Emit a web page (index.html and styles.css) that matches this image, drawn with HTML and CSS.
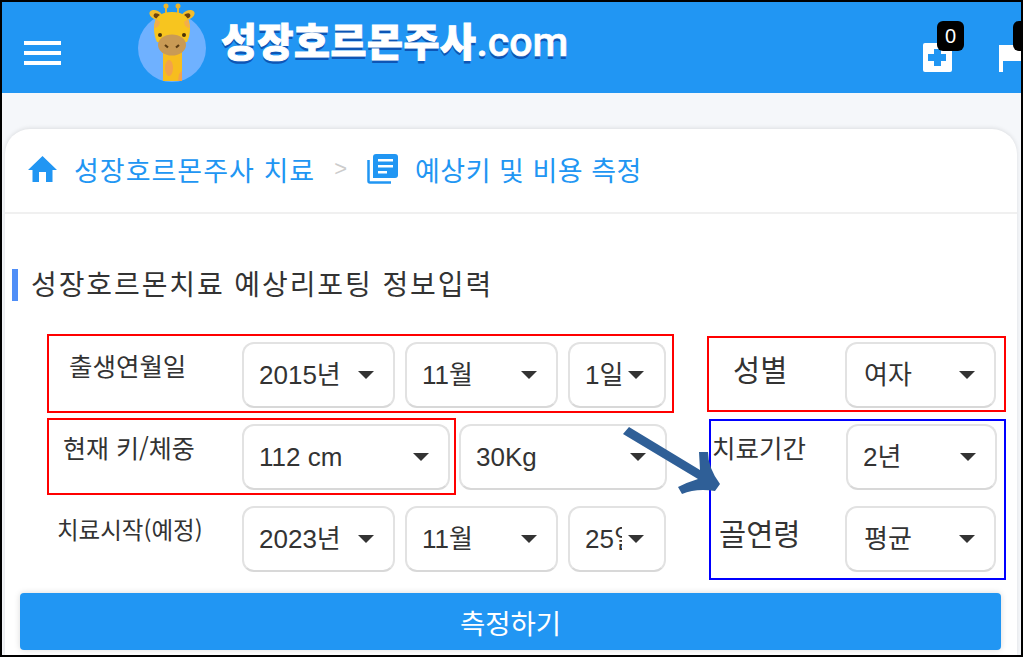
FILE: index.html
```html
<!DOCTYPE html>
<html lang="ko">
<head>
    <meta charset="UTF-8">
    <meta name="viewport" content="width=device-width, initial-scale=1.0">
    <title>성장호르몬주사 예상키 및 비용 측정</title>
    <link rel="stylesheet" href="styles.css">
</head>
<body>
<div class="frame">
    <header class="topbar">
        <div class="burger"><span></span><span></span><span></span></div>
        <a class="logo" href="#">
            <svg class="giraffe" width="72" height="82" viewBox="0 0 72 82">
                <circle cx="36" cy="46" r="34" fill="#6fb1ff"/>
                <path d="M30 4v12M42 4v12" stroke="#e9b32c" stroke-width="2"/>
                <circle cx="30" cy="4" r="2.500" fill="#eeb52a"/>
                <circle cx="42" cy="4" r="2.500" fill="#eeb52a"/>
                <ellipse cx="20" cy="13" rx="7" ry="4.500" transform="rotate(25 20 13)" fill="#f2bd2d"/>
                <ellipse cx="21" cy="14" rx="3.500" ry="2.500" transform="rotate(25 21 14)" fill="#6b4310"/>
                <ellipse cx="52" cy="13" rx="7" ry="4.500" transform="rotate(-25 52 13)" fill="#f2bd2d"/>
                <ellipse cx="51" cy="14" rx="3.500" ry="2.500" transform="rotate(-25 51 14)" fill="#6b4310"/>
                <path d="M27 48h19v31H27z" fill="#f7bd1e"/>
                <ellipse cx="33" cy="66" rx="4" ry="8" fill="#f3a24b"/>
                <path d="M43 72l3-3v10h-4z" fill="#f3a24b"/>
                <path d="M18 26q0-16 18-16t18 16q0 8-3 14H21q-3-6-3-14z" fill="#f7c51f"/>
                <path d="M18 26q5 0 6-6l-4-3zM54 26q-5 0-6-6l4-3z" fill="#f3ae4b"/>
                <circle cx="24" cy="33" r="2" fill="#4a3208"/>
                <circle cx="48" cy="33" r="2" fill="#4a3208"/>
                <ellipse cx="36" cy="43" rx="14" ry="10.500" fill="#c99a55"/>
                <path d="M29 43l3 2.500M43 43l-3 2.500" stroke="#5c3c12" stroke-width="2.200"/>
            </svg>
            <span class="logo-text">성장호르몬주사<em>.com</em></span>
        </a>
        <div class="top-icons">
            <a class="top-icon" href="#">
                <svg width="29" height="29" viewBox="0 0 29 29"><path d="M2 0h25a2 2 0 0 1 2 2v25a2 2 0 0 1-2 2H2a2 2 0 0 1-2-2V2a2 2 0 0 1 2-2z" fill="#fff"/><path d="M11 6h7v5h5v7h-5v5h-7v-5H5v-7h6z" fill="#2196f3"/></svg>
                <span class="badge">0</span>
            </a>
            <a class="top-icon" href="#">
                <svg width="29" height="29" viewBox="0 0 29 29"><path d="M0 2h29v16H4v11H0z" fill="#fff"/></svg>
                <span class="badge">0</span>
            </a>
        </div>
    </header>

    <main class="content">
        <section class="card">
            <nav class="crumbs">
                <svg class="crumb-home" width="29" height="26" viewBox="0 0 29 26"><path d="M14.500 0L29 14h-4.500v12H18V16h-7v10H4.500V14H0z" fill="#2196f3"/></svg>
                <a href="#">성장호르몬주사 치료</a>
                <span class="crumb-sep">&gt;</span>
                <svg class="crumb-book" width="31" height="30" viewBox="0 0 31 30"><path d="M9 0h19a3 3 0 0 1 3 3v18a3 3 0 0 1-3 3H6V3a3 3 0 0 1 3-3z" fill="#2196f3"/><path d="M11 5h15v2.500H11zM11 11h15v2.500H11zM11 17h9v2.500H11z" fill="#fff"/><path d="M1.500 6v21a1.500 1.500 0 0 0 1.500 1.500h21" fill="none" stroke="#2196f3" stroke-width="2.500"/></svg>
                <a class="crumb-last" href="#">예상키 및 비용 측정</a>
            </nav>

            <h2 class="section-title">성장호르몬치료 예상리포팅 정보입력</h2>

            <form class="report-form">
                <div class="form-row">
                    <label class="lbl lbl-birth">출생연월일</label>
                    <div class="sel sel-year"><select><option>2015년</option></select></div>
                    <div class="sel sel-year"><select><option>11월</option></select></div>
                    <div class="sel sel-day"><select><option>1일</option></select></div>
                    <label class="lbl lbl-gender">성별</label>
                    <div class="sel sel-side"><select><option>여자</option></select></div>
                </div>
                <div class="form-row">
                    <label class="lbl lbl-height">현재 키/체중</label>
                    <div class="sel sel-wide"><select><option>112 cm</option></select></div>
                    <div class="sel sel-wide"><select><option>30Kg</option></select></div>
                    <label class="lbl lbl-period">치료기간</label>
                    <div class="sel sel-side sel-tight"><select><option>2년</option></select></div>
                </div>
                <div class="form-row">
                    <label class="lbl lbl-start">치료시작(예정)</label>
                    <div class="sel sel-year"><select><option>2023년</option></select></div>
                    <div class="sel sel-year"><select><option>11월</option></select></div>
                    <div class="sel sel-day"><select><option>25일</option></select></div>
                    <label class="lbl lbl-bone">골연령</label>
                    <div class="sel sel-side"><select><option>평균</option></select></div>
                </div>
                <button type="button" class="submit-btn">측정하기</button>
            </form>
        </section>
    </main>

    <!-- 캡처 위에 덧그린 표시 -->
    <div class="mark mark-birth"></div>
    <div class="mark mark-height"></div>
    <div class="mark mark-gender"></div>
    <div class="mark mark-blue"></div>
    <svg class="mark-arrow" width="100" height="70" viewBox="0 0 100 70">
        <path d="M7 1L78 44L77 26H86Q86 42 98 58L93 65Q74 62 60 68L56 61Q66 56 76 53L1 8z" fill="#2f5f97"/>
    </svg>
</div>
</body>
</html>
```

FILE: styles.css
```css
* {
    box-sizing: border-box;
}
body {
    margin: 0;
    font-family: "Liberation Sans", "Noto Sans CJK KR", sans-serif;
    color: #333;
    background: #fff;
}
a {
    text-decoration: none;
    color: inherit;
}
.frame {
    position: relative;
    width: 1023px;
    height: 657px;
    border: 2px solid #000;
    overflow: hidden;
    display: flex;
    flex-direction: column;
    background: #f5f7fa;
}

/* 상단 바 */
.topbar {
    flex: none;
    height: 91px;
    background: #2196f3;
    display: flex;
    padding-left: 22px;
    overflow: hidden;
}
.burger {
    width: 37px;
    padding-top: 39px;
    display: flex;
    flex-direction: column;
    gap: 6px;
}
.burger span {
    display: block;
    height: 4px;
    background: #fff;
}
.logo {
    display: flex;
    margin-left: 75px;
    height: 82px;
}
.logo-text {
    margin: 12px 0 0 13px;
    font-family: "Noto Sans CJK KR", sans-serif;
    font-weight: 900;
    font-size: 39px;
    line-height: 50px;
    letter-spacing: 0.6px;
    color: #fff;
    -webkit-text-stroke: 1px #fff;
    text-shadow: 0 3px 0 #0d55b5;
    white-space: nowrap;
}
.logo-text em {
    font-family: "Roboto", sans-serif;
    font-style: normal;
    font-weight: 500;
    font-size: 41px;
    letter-spacing: 0;
    -webkit-text-stroke: 0.6px #fff;
}
.top-icons {
    margin-left: auto;
    display: flex;
    gap: 47px;
    flex: none;
    width: 98px;
    padding-top: 41px;
}
.top-icon {
    position: relative;
    display: block;
    width: 29px;
    height: 29px;
    flex: none;
}
.badge {
    position: absolute;
    top: -22px;
    left: 14px;
    width: 27px;
    height: 30px;
    border-radius: 6px;
    background: #000;
    color: #fff;
    font-size: 20px;
    line-height: 30px;
    text-align: center;
}

/* 본문 */
.content {
    flex: 1;
    padding: 36px 4px 0 3px;
}
.card {
    height: 100%;
    background: #fff;
    border-radius: 25px 25px 0 0;
    box-shadow: 0 -1px 4px rgba(0, 0, 0, .1);
}
.crumbs {
    height: 85px;
    padding: 0 0 3px 23px;
    border-bottom: 2px solid #f0f0f0;
    display: flex;
    align-items: center;
    font-size: 27px;
    letter-spacing: 1px;
    color: #2196f3;
    font-family: "Noto Sans CJK KR", sans-serif;
}
.crumb-home {
    margin-right: 17px;
}
.crumb-sep {
    margin: 0 19px;
    color: #ccc;
    font-size: 22px;
    font-family: "Liberation Sans", sans-serif;
}
.crumb-book {
    margin-right: 17px;
}
.crumb-last {
    letter-spacing: 0.5px;
}
.section-title {
    margin: 55px 0 0 7px;
    padding-left: 13px;
    height: 32px;
    border-left: 6px solid #4f8ef7;
    font-family: "Noto Sans CJK KR", sans-serif;
    font-weight: 400;
    font-size: 28px;
    letter-spacing: 1.9px;
    line-height: 28px;
    color: #333;
}

/* 입력 폼 */
.report-form {
    padding-top: 41px;
}
.form-row {
    display: flex;
    height: 66px;
    margin: 0 0 16px 42px;
}
.lbl {
    flex: none;
    font-family: "Noto Sans CJK KR", sans-serif;
    font-size: 25px;
    line-height: 34px;
    color: #333;
}
.lbl-birth {
    width: 195px;
    padding: 6px 0 0 22px;
    font-size: 25.500px;
}
.lbl-height {
    width: 195px;
    padding: 6px 0 0 16px;
}
.lbl-start {
    width: 195px;
    padding: 6px 0 0 10px;
    font-size: 23.5px;
}
.lbl-gender {
    width: 179px;
    padding: 9px 0 0 67px;
    font-size: 29.500px;
}
.lbl-period {
    width: 179px;
    padding: 6px 0 0 45px;
    font-size: 25.500px;
}
.lbl-bone {
    width: 179px;
    padding: 9px 0 0 53px;
    font-size: 29.500px;
}
.sel {
    position: relative;
    flex: none;
    height: 66px;
    margin-right: 10px;
}
.sel::after {
    content: "";
    position: absolute;
    right: 21px;
    top: 29px;
    border-left: 8px solid transparent;
    border-right: 8px solid transparent;
    border-top: 8px solid #333;
    pointer-events: none;
}
.sel select {
    appearance: none;
    width: 100%;
    height: 100%;
    padding: 0 30px 0 15px;
    border: 2px solid #e2e2e2;
    border-bottom-color: #d8d8d8;
    border-radius: 12px;
    background: #fff;
    color: #333;
    font-family: "Liberation Sans", "Noto Sans CJK KR", sans-serif;
    font-size: 26px;
}
.sel-year {
    width: 153px;
}
.sel-day {
    width: 98px;
    margin-right: 0;
}
.sel-day select {
    padding-right: 42px;
}
.sel-day::after {
    right: 22px;
}
.sel-wide {
    width: 208px;
    margin-right: 9px;
}
.sel-wide + .sel-wide {
    margin-right: 0;
}
.sel-side {
    width: 151px;
    margin-right: 0;
}
.sel-side select {
    padding-left: 17px;
}
.sel-side.sel-tight select {
    padding-left: 15px;
}
.submit-btn {
    display: block;
    width: 981px;
    height: 57px;
    margin: 21px 0 0 15px;
    border: none;
    border-radius: 4px;
    background: #2196f3;
    color: #fff;
    font-family: "Noto Sans CJK KR", sans-serif;
    font-size: 27.500px;
    box-shadow: 0 0 6px rgba(0, 0, 0, .15);
    cursor: pointer;
}

/* 덧그린 빨간/파란 박스와 화살표 */
.mark {
    position: absolute;
    border: 2px solid #f00;
    pointer-events: none;
}
.mark-birth {
    left: 45px;
    top: 332px;
    width: 627px;
    height: 79px;
}
.mark-height {
    left: 45px;
    top: 416px;
    width: 409px;
    height: 77px;
}
.mark-gender {
    left: 705px;
    top: 334px;
    width: 299px;
    height: 76px;
}
.mark-blue {
    left: 707px;
    top: 417px;
    width: 297px;
    height: 161px;
    border-color: #00f;
}
.mark-arrow {
    position: absolute;
    left: 620px;
    top: 424px;
}
```
